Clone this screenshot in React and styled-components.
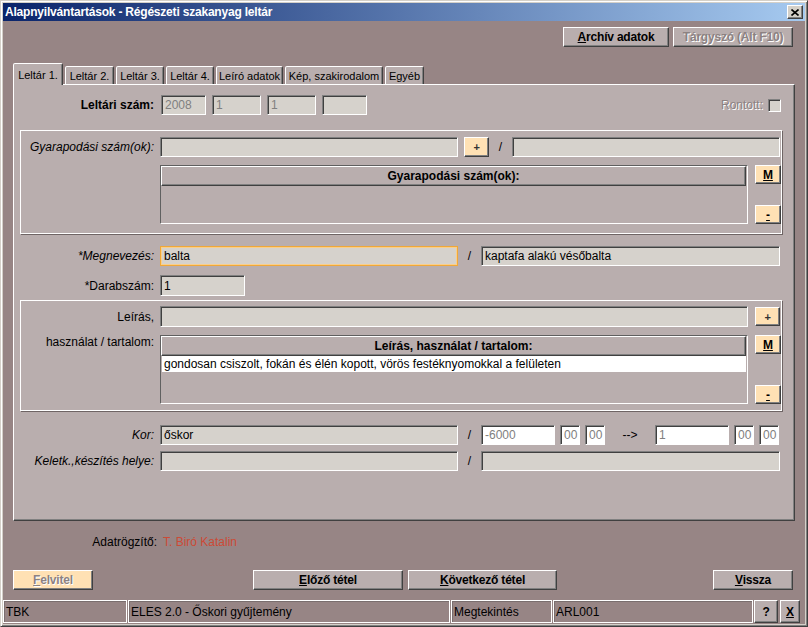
import React from 'react';
import styled, { createGlobalStyle, css } from 'styled-components';

const GlobalStyle = createGlobalStyle`
  html, body {
    margin: 0;
    padding: 0;
    background: #978585;
  }
  body {
    font-family: "Liberation Sans", Arial, sans-serif;
    font-size: 12px;
    color: #000;
  }
  * {
    box-sizing: border-box;
  }
`;

const raised = css`
  border: 1px solid;
  border-color: #fff #404040 #404040 #fff;
  box-shadow: inset -1px -1px 0 #808080;
`;

const sunken = css`
  border: 1px solid;
  border-color: #808080 #fff #fff #808080;
  box-shadow: inset 1px 1px 0 #404040;
`;

const Window = styled.div`
  width: 808px;
  height: 627px;
  display: flex;
  flex-direction: column;
  padding: 2px;
  border: 1px solid;
  border-color: #d4d0c8 #404040 #404040 #d4d0c8;
  background: #d4d0c8;
  box-shadow: inset 1px 1px 0 #fff, inset -1px -1px 0 #808080;
`;

const TitleBar = styled.div`
  flex: none;
  height: 18px;
  display: flex;
  align-items: center;
  justify-content: space-between;
  padding: 0 2px;
  background: linear-gradient(to right, #0a246a, #a6caf0);
`;

const Title = styled.span`
  color: #fff;
  font-weight: bold;
  font-size: 12px;
  letter-spacing: -0.2px;
`;

const CloseBox = styled.div`
  width: 16px;
  height: 14px;
  background: #d4d0c8;
  ${raised};
  display: flex;
  align-items: center;
  justify-content: center;
`;

const Body = styled.div`
  flex: 1;
  display: flex;
  flex-direction: column;
  padding: 6px 12px 0 10px;
  background: #978585;
`;

const TopActions = styled.div`
  display: flex;
  justify-content: flex-end;
  gap: 4px;
`;

const Btn = styled.button`
  flex: none;
  width: ${p => p.$w}px;
  height: ${p => p.$h || 20}px;
  padding: 0;
  background: ${p => (p.$peach ? '#ffe1b4' : '#b9aeae')};
  ${raised};
  font-family: inherit;
  font-size: ${p => p.$fs || 12}px;
  font-weight: bold;
  color: ${p => p.$ink || '#000'};
  letter-spacing: -0.2px;
  display: flex;
  align-items: center;
  justify-content: center;
  cursor: default;
  &:disabled {
    color: #8c8282;
    text-shadow: 1px 1px 0 #fff;
  }
`;

const TabBar = styled.div`
  margin-top: 16px;
  height: 21px;
  display: flex;
  align-items: flex-end;
  gap: 2px;
`;

const Tab = styled.div`
  flex: none;
  width: ${p => p.$w}px;
  height: 18px;
  padding-top: 3px;
  background: #b9aeae;
  border: 1px solid;
  border-bottom: none;
  border-color: #fff #404040 transparent #fff;
  border-radius: 2px 2px 0 0;
  box-shadow: inset -1px 0 0 #808080;
  font-size: 11px;
  text-align: center;
  white-space: nowrap;
  ${p =>
    p.$active &&
    css`
      position: relative;
      z-index: 1;
      height: 22px;
      margin-bottom: -1px;
      padding-top: 5px;
    `}
`;

const Panel = styled.div`
  width: 782px;
  height: 437px;
  display: flex;
  flex-direction: column;
  padding: 10px 10px 0 6px;
  background: #b9aeae;
  border: 1px solid;
  border-color: #fff #404040 #404040 #fff;
  box-shadow: inset -1px -1px 0 #808080;
`;

const Row = styled.div`
  display: flex;
  align-items: ${p => p.$align || 'center'};
  margin-top: ${p => p.$mt || 0}px;
  padding-right: ${p => p.$pr || 0}px;
`;

const Label = styled.div`
  flex: none;
  width: ${p => p.$w}px;
  margin-right: ${p => p.$mr ?? 6}px;
  text-align: right;
  font-size: 12px;
  white-space: nowrap;
  font-style: ${p => (p.$italic ? 'italic' : 'normal')};
  font-weight: ${p => (p.$bold ? 'bold' : 'normal')};
`;

const Field = styled.div`
  flex: none;
  width: ${p => p.$w}px;
  height: ${p => p.$h || 20}px;
  margin-left: ${p => p.$ml || 0}px;
  padding: 0 3px;
  display: flex;
  align-items: center;
  background: ${p => (p.$white ? '#fff' : '#d6d2cc')};
  ${p =>
    p.$focus
      ? css`
          border: 1px solid #f0a838;
          box-shadow: inset 0 0 0 1px #f9cf8c;
        `
      : sunken};
  color: ${p => (p.$muted ? '#808080' : '#000')};
  font-size: 12px;
  white-space: nowrap;
  overflow: hidden;
`;

const Slash = styled.span`
  flex: none;
  width: 23px;
  text-align: center;
  font-size: 12px;
`;

const Arrow = styled.span`
  flex: none;
  width: 50px;
  text-align: center;
  font-size: 12px;
`;

const Rontott = styled.div`
  margin-left: auto;
  display: flex;
  align-items: center;
  gap: 5px;
  color: #8c8282;
  text-shadow: 1px 1px 0 #fff;
  font-size: 12px;
`;

const CheckBox = styled.div`
  width: 13px;
  height: 13px;
  background: #d6d2cc;
  ${sunken};
`;

const GroupBox = styled.div`
  width: 762px;
  margin-top: ${p => p.$mt}px;
  padding: ${p => p.$pt}px 1px ${p => p.$pb}px 0;
  border: 1px solid #fff;
  box-shadow: 1px 1px 0 #6e6464;
`;

const Grid = styled.div`
  flex: none;
  width: 588px;
  height: ${p => p.$h}px;
  margin-left: 139px;
  ${sunken};
  box-shadow: none;
  border-color: #606060 #fff #fff #606060;
  display: flex;
  flex-direction: column;
`;

const GridHead = styled.div`
  height: 20px;
  margin-right: 1px;
  background: #b9aeae;
  ${raised};
  display: flex;
  align-items: center;
  justify-content: center;
  font-weight: bold;
  font-size: 12px;
`;

const GridRow = styled.div`
  height: 17px;
  padding: 0 2px;
  background: #fff;
  border: 1px solid #b9aeae;
  border-top: none;
  display: flex;
  align-items: center;
  font-size: 12px;
  white-space: nowrap;
`;

const SideButtons = styled.div`
  flex: none;
  width: 26px;
  height: ${p => p.$h}px;
  margin-left: 7px;
  display: flex;
  flex-direction: column;
  justify-content: space-between;
`;

const Recorder = styled.div`
  margin-top: 14px;
  height: 14px;
  display: flex;
  align-items: center;
  font-size: 12px;
`;

const RecorderName = styled.span`
  color: #cc4a36;
`;

const BottomActions = styled.div`
  margin-top: 21px;
  display: flex;
  gap: 5px;
`;

const StatusBar = styled.div`
  flex: none;
  height: 24px;
  padding-bottom: 1px;
  display: flex;
  gap: 1px;
  background: #978585;
`;

const StatusCell = styled.div`
  flex: none;
  width: ${p => p.$w}px;
  height: 23px;
  padding: 0 2px;
  border: 1px solid #fff;
  box-shadow: inset 1px 1px 0 #7a6e6e;
  display: flex;
  align-items: center;
  font-size: 12px;
  white-space: nowrap;
`;

const tabs = [
  ['Leltár 1.', 50],
  ['Leltár 2.', 49],
  ['Leltár 3.', 48],
  ['Leltár 4.', 48],
  ['Leíró adatok', 67],
  ['Kép, szakirodalom', 98],
  ['Egyéb', 39],
];

const CloseIcon = () => (
  <svg width="8" height="7" viewBox="0 0 8 7">
    <path d="M0.5 0.5 L7.5 6.5 M7.5 0.5 L0.5 6.5" stroke="#000" strokeWidth="1.6" />
  </svg>
);

export default function App() {
  return (
    <>
      <GlobalStyle />
      <Window>
        <TitleBar>
          <Title>Alapnyilvántartások - Régészeti szakanyag leltár</Title>
          <CloseBox>
            <CloseIcon />
          </CloseBox>
        </TitleBar>

        <Body>
          <TopActions>
            <Btn $w={106}>
              <u>A</u>rchív adatok
            </Btn>
            <Btn $w={120} disabled>
              Tár<u>g</u>yszó (Alt F10)
            </Btn>
          </TopActions>

          <TabBar>
            {tabs.map(([name, w], i) => (
              <Tab key={name} $w={w} $active={i === 0}>
                {name}
              </Tab>
            ))}
          </TabBar>

          <Panel>
            <Row $pr={3}>
              <Label $w={134} $mr={7} $bold>
                Leltári szám:
              </Label>
              <Field $w={45} $muted>2008</Field>
              <Field $w={49} $ml={6} $muted>1</Field>
              <Field $w={49} $ml={6} $muted>1</Field>
              <Field $w={45} $ml={6} />
              <Rontott>
                Rontott:
                <CheckBox />
              </Rontott>
            </Row>

            <GroupBox $mt={15} $pt={6} $pb={9}>
              <Row>
                <Label $w={133} $italic>
                  Gyarapodási szám(ok):
                </Label>
                <Field $w={298} />
                <Btn $w={25} $h={20} $peach $fs={11} $ink="#333" style={{ marginLeft: 6 }}>
                  +
                </Btn>
                <Slash>/</Slash>
                <Field $w={268} />
              </Row>
              <Row $mt={8} $align="stretch">
                <Grid $h={59}>
                  <GridHead>Gyarapodási szám(ok):</GridHead>
                </Grid>
                <SideButtons $h={59}>
                  <Btn $w={26} $h={19} $peach>
                    <u>M</u>
                  </Btn>
                  <Btn $w={26} $h={19} $peach>
                    <u>-</u>
                  </Btn>
                </SideButtons>
              </Row>
            </GroupBox>

            <Row $mt={12}>
              <Label $w={134} $italic>
                *Megnevezés:
              </Label>
              <Field $w={298} $focus>
                balta
              </Field>
              <Slash>/</Slash>
              <Field $w={299}>kaptafa alakú vésőbalta</Field>
            </Row>

            <Row $mt={9}>
              <Label $w={134}>*Darabszám:</Label>
              <Field $w={85} $h={21}>
                1
              </Field>
            </Row>

            <GroupBox $mt={4} $pt={5} $pb={6}>
              <Row>
                <Label $w={133}>Leírás,</Label>
                <Field $w={588} $h={21} />
                <Btn $w={25} $h={19} $peach $fs={11} $ink="#333" style={{ marginLeft: 7 }}>
                  +
                </Btn>
              </Row>
              <Row $mt={8} $align="flex-start">
                <Label $w={133}>használat / tartalom:</Label>
                <Grid $h={69} style={{ marginLeft: 0 }}>
                  <GridHead>Leírás, használat / tartalom:</GridHead>
                  <GridRow>
                    gondosan csiszolt, fokán és élén kopott, vörös festéknyomokkal a felületen
                  </GridRow>
                </Grid>
                <SideButtons $h={69}>
                  <Btn $w={26} $h={19} $peach>
                    <u>M</u>
                  </Btn>
                  <Btn $w={26} $h={19} $peach>
                    <u>-</u>
                  </Btn>
                </SideButtons>
              </Row>
            </GroupBox>

            <Row $mt={14}>
              <Label $w={134} $italic>
                Kor:
              </Label>
              <Field $w={298}>őskor</Field>
              <Slash>/</Slash>
              <Field $w={74} $white $muted>
                -6000
              </Field>
              <Field $w={20} $ml={5} $white $muted>
                00
              </Field>
              <Field $w={20} $ml={5} $white $muted>
                00
              </Field>
              <Arrow>--&gt;</Arrow>
              <Field $w={74} $white $muted>
                1
              </Field>
              <Field $w={20} $ml={5} $white $muted>
                00
              </Field>
              <Field $w={20} $ml={5} $white $muted>
                00
              </Field>
            </Row>

            <Row $mt={6}>
              <Label $w={134} $italic>
                Keletk.,készítés helye:
              </Label>
              <Field $w={298} />
              <Slash>/</Slash>
              <Field $w={299} />
            </Row>
          </Panel>

          <Recorder>
            <Label $w={144} $mr={6}>
              Adatrögzítő:
            </Label>
            <RecorderName>T. Biró Katalin</RecorderName>
          </Recorder>

          <BottomActions>
            <Btn $w={80} $peach disabled>
              <u>F</u>elvitel
            </Btn>
            <Btn $w={150} style={{ marginLeft: 155 }}>
              <u>E</u>lőző tétel
            </Btn>
            <Btn $w={149}>
              <u>K</u>övetkező tétel
            </Btn>
            <Btn $w={80} style={{ marginLeft: 'auto' }}>
              <u>V</u>issza
            </Btn>
          </BottomActions>
        </Body>

        <StatusBar>
          <StatusCell $w={124}>TBK</StatusCell>
          <StatusCell $w={322}>ELES 2.0 - Őskori gyűjtemény</StatusCell>
          <StatusCell $w={101}>Megtekintés</StatusCell>
          <StatusCell $w={200}>ARL001</StatusCell>
          <Btn $w={24} $h={23}>?</Btn>
          <Btn $w={20} $h={23} style={{ marginLeft: 1 }}>
            <u>X</u>
          </Btn>
        </StatusBar>
      </Window>
    </>
  );
}
